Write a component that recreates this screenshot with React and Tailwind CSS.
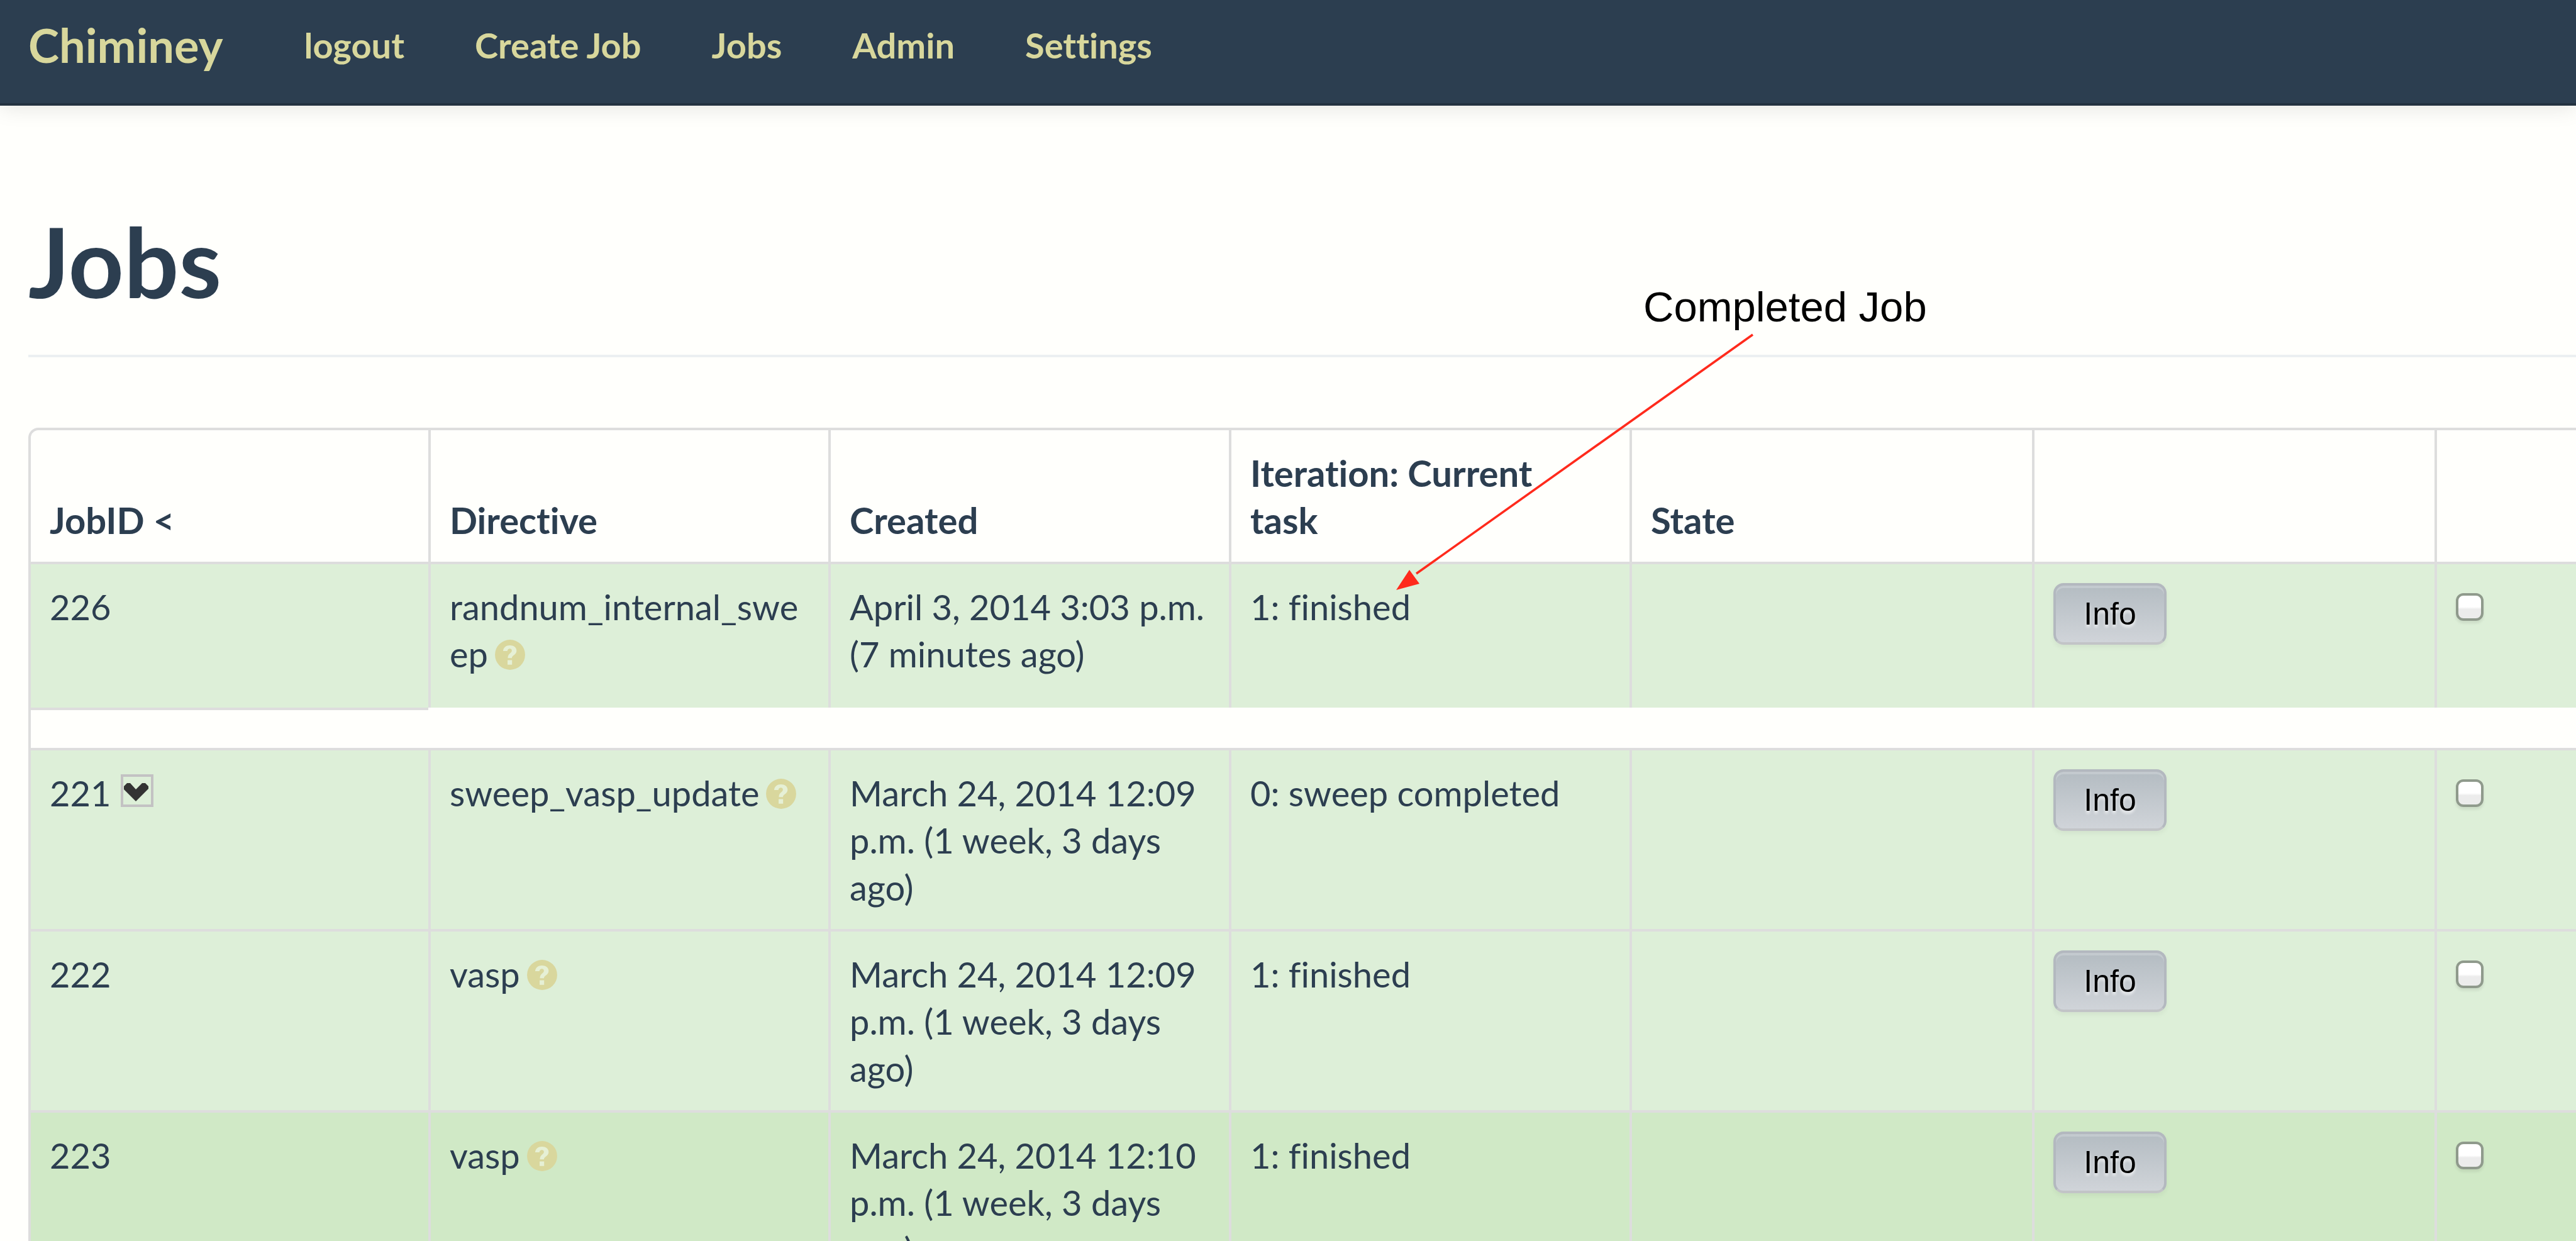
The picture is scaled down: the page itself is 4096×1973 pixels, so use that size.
import React from 'react';

const navItems = ['logout', 'Create Job', 'Jobs', 'Admin', 'Settings'];

const jobs = [
  { id: '226', directive: 'randnum_internal_sweep', created: 'April 3, 2014 3:03 p.m. (7 minutes ago)', task: '1: finished', last: true },
  { id: '221', directive: 'sweep_vasp_update', created: 'March 24, 2014 12:09 p.m. (1 week, 3 days ago)', task: '0: sweep completed', open: true },
  { id: '222', directive: 'vasp', created: 'March 24, 2014 12:09 p.m. (1 week, 3 days ago)', task: '1: finished' },
  { id: '223', directive: 'vasp', created: 'March 24, 2014 12:10 p.m. (1 week, 3 days ago)', task: '1: finished', hover: true },
];

function HelpIcon() {
  return (
    <svg viewBox="0 0 14 14" className="ml-2.5 inline-block size-[50px] align-[-5px]" aria-hidden="true">
      <circle cx="7" cy="7" r="6.7" fill="#d9d79d" />
      <path d="M3.900 5.300c.2-1.700 1.400-2.500 3-2.500 1.700 0 3 .9 3 2.400 0 1.900-2.100 2-2.100 3.300H6c0-2.100 1.800-2.200 1.800-3.300 0-.6-.4-.9-.9-.9-.6 0-1 .4-1.100 1zM5.900 9.400h2v2h-2z" fill="#e6f0d5" />
    </svg>
  );
}

function Toggle() {
  return (
    <button aria-label="Expand job" className="ml-4 inline-flex h-[52px] w-[52px] items-center justify-center border-4 border-[#c3c2c3] align-[3px]">
      <svg viewBox="0 0 44 44" className="size-11" aria-hidden="true">
        <path d="M1 15 6 10h5l9 10 10-10h5l5 5v4L20 39 1 20z" fill="#333333" />
      </svg>
    </button>
  );
}

function Row({ job }) {
  const bg = job.hover ? 'bg-[#d0e9c6]' : 'bg-[#ddefd8]';
  const cell = 'border-t-4 border-l-4 border-[#dddddd] pt-[30px] pb-[29px] px-[30px] align-top break-words bg-clip-padding ' + bg;
  return (
    <tr className={job.last ? 'h-[232px]' : ''}>
      <td className={cell}>{job.id}{job.open && <Toggle />}</td>
      <td className={cell}>{job.directive}<HelpIcon /></td>
      <td className={cell}>{job.created}</td>
      <td className={cell}>{job.task}</td>
      <td className={cell}></td>
      <td className={cell}>
        <button className="block h-[98px] w-[180px] rounded-2xl border-4 border-[#b3b8bf] border-b-[#c2c4c7] bg-linear-to-b from-[#b4bcc2] to-[#d0d4d9] font-['Liberation_Sans',sans-serif] text-[50px] leading-none text-black shadow-[inset_0_4px_0_rgba(255,255,255,0.2),0_4px_8px_rgba(0,0,0,0.05)] [text-shadow:0_4px_4px_rgba(255,255,255,0.75)]">Info</button>
      </td>
      <td className={cell}>
        <input type="checkbox" aria-label={'Select job ' + job.id} className="mt-4 block size-11 appearance-none rounded-xl border-4 border-[#8f9a8c] bg-linear-to-b from-white from-50% to-[#ececec] to-60% shadow-[0_4px_4px_rgba(0,0,0,0.08)]" />
      </td>
    </tr>
  );
}

export default function App() {
  const head = 'border-t-4 border-l-4 border-[#dddddd] px-[30px] pt-[30px] pb-[29px] align-bottom text-left text-[58px] font-bold';
  return (
    <div className="relative h-screen overflow-hidden bg-[#fffffc] font-[Lato,sans-serif] text-[56px] leading-[75px] text-[#2c3e50] [font-variant-ligatures:none]">
      <nav className="flex h-[168px] items-start border-b-4 border-[#243240] bg-[#2c3e50] pl-[45px] font-bold text-[#d8d79c] shadow-[0_4px_32px_rgba(0,0,0,0.1)]">
        <a href="#" className="mr-[73px] pt-[34px] text-[74px]">Chiminey</a>
        {navItems.map((item) => (
          <a key={item} href="#" className="px-14 pt-[34px]">{item}</a>
        ))}
      </nav>
      <main className="pl-[45px]">
        <h1 className="mb-[112px] border-b-4 border-[#ecf0f1] pt-[175px] pb-[77px] text-[154px] leading-[144px] font-bold">Jobs</h1>
        <table className="table-fixed w-[4460px] border-separate border-spacing-0 rounded-tl-2xl">
          <colgroup>
            <col className="w-[636px]" /><col className="w-[636px]" /><col className="w-[637px]" /><col className="w-[637px]" />
            <col className="w-[640px]" /><col className="w-[640px]" /><col />
          </colgroup>
          <thead>
            <tr>
              <th className={head + ' rounded-tl-2xl'}>JobID &lt;</th>
              <th className={head}>Directive</th>
              <th className={head}>Created</th>
              <th className={head}>Iteration: Current<br />task</th>
              <th className={head}>State</th>
              <th className={head}></th>
              <th className={head}></th>
            </tr>
          </thead>
          <tbody>
            <Row job={jobs[0]} />
            <tr className="h-16">
              <td className="border-t-4 border-l-4 border-[#dddddd]"></td>
              <td colSpan={6}></td>
            </tr>
            {jobs.slice(1).map((job) => <Row key={job.id} job={job} />)}
          </tbody>
        </table>
      </main>
      <div className="absolute top-[450px] left-[2613px] font-['Liberation_Sans',sans-serif] text-[67px] text-black">Completed Job</div>
      <svg className="absolute top-[530px] left-[2218px] h-[410px] w-[574px]" viewBox="0 0 574 410" aria-hidden="true">
        <path d="M569 2 34 382" stroke="#ff2a1c" strokeWidth="3.600" />
        <path d="M2 408 23 376 39 398z" fill="#ff2a1c" />
      </svg>
    </div>
  );
}
